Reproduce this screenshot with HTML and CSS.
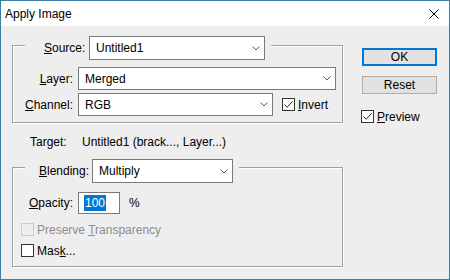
FILE: index.html
```html
<!DOCTYPE html>
<html>
<head>
<meta charset="utf-8">
<link rel="stylesheet" href="styles.css">
</head>
<body>
<div class="window">
  <div class="titlebar">
    <span class="title">Apply Image</span>
    <svg class="close" width="10" height="10" viewBox="0 0 10 10"><path d="M0.5 0.5 L9.5 9.5 M9.5 0.5 L0.5 9.5" stroke="#000" stroke-width="1" fill="none"/></svg>
  </div>
  <div class="content">
    <div class="left">
      <div class="group">
        <div class="ghead g1head">
          <div class="seg-l"></div>
          <div class="hc hc1">
            <span class="hlabel hl1"><u>S</u>ource:</span>
            <div class="select s-source"><span class="val">Untitled1</span><svg class="chev" width="8" height="5" viewBox="0 0 8 5"><path d="M0.5 0.5 L4 4 L7.5 0.5" stroke="#555" fill="none"/></svg></div>
          </div>
          <div class="seg-r"></div>
        </div>
        <div class="gbody b1">
          <div class="row r23">
            <span class="lbl"><u>L</u>ayer:</span>
            <div class="select s-layer"><span class="val">Merged</span><svg class="chev" width="8" height="5" viewBox="0 0 8 5"><path d="M0.5 0.5 L4 4 L7.5 0.5" stroke="#555" fill="none"/></svg></div>
          </div>
          <div class="row r23 gap3">
            <span class="lbl"><u>C</u>hannel:</span>
            <div class="select s-channel"><span class="val">RGB</span><svg class="chev" width="8" height="5" viewBox="0 0 8 5"><path d="M0.5 0.5 L4 4 L7.5 0.5" stroke="#555" fill="none"/></svg></div>
            <div class="check invert">
              <span class="box"><svg width="11" height="11" viewBox="0 0 11 11"><path d="M1.5 5.5 L4.2 8.3 L9.6 2.3" stroke="#222" stroke-width="1" fill="none"/></svg></span>
              <span class="ctext"><u>I</u>nvert</span>
            </div>
          </div>
        </div>
      </div>

      <div class="target">
        <span class="tlabel">Target:</span>
        <span class="tval">Untitled1 (brack..., Layer...)</span>
      </div>

      <div class="group">
        <div class="ghead g2head">
          <div class="seg-l"></div>
          <div class="hc hc2">
            <span class="hlabel hl2"><u>B</u>lending:</span>
            <div class="select s-blend"><span class="val">Multiply</span><svg class="chev" width="8" height="5" viewBox="0 0 8 5"><path d="M0.5 0.5 L4 4 L7.5 0.5" stroke="#555" fill="none"/></svg></div>
          </div>
          <div class="seg-r"></div>
        </div>
        <div class="gbody b2">
          <div class="row r22">
            <span class="lbl"><u>O</u>pacity:</span>
            <div class="input"><span class="sel">100</span></div>
            <span class="pct">%</span>
          </div>
          <div class="row r21 crow first">
            <span class="box disabled"></span>
            <span class="ctext dis">Preserve <u>T</u>ransparency</span>
          </div>
          <div class="row r21 crow">
            <span class="box"></span>
            <span class="ctext">Mas<u>k</u>...</span>
          </div>
        </div>
      </div>
    </div>

    <div class="right">
      <div class="btn ok">OK</div>
      <div class="btn reset">Reset</div>
      <div class="check preview">
        <span class="box"><svg width="11" height="11" viewBox="0 0 11 11"><path d="M1.5 5.5 L4.2 8.3 L9.6 2.3" stroke="#222" stroke-width="1" fill="none"/></svg></span>
        <span class="ctext"><u>P</u>review</span>
      </div>
    </div>
  </div>
</div>
</body>
</html>
```

FILE: styles.css
```css
* { box-sizing: border-box; }
html, body { margin: 0; padding: 0; }
body {
  width: 450px;
  height: 280px;
  font-family: "Liberation Sans", Arial, sans-serif;
  font-size: 12px;
  color: #000;
  overflow: hidden;
}
u { text-decoration: underline; text-underline-offset: 1px; }

.window {
  width: 450px;
  height: 280px;
  border: 1px solid #3a7ea3;
  display: flex;
  flex-direction: column;
  background: #eeeeee;
}
.titlebar {
  height: 25px;
  background: #fff;
  display: flex;
  align-items: center;
  padding-left: 4px;
  flex: none;
}
.title { line-height: 14px; }
.close { margin-left: auto; margin-right: 10px; display: block; }

.content {
  flex: 1;
  display: flex;
  padding: 10px 0 0 11px;
}
.left {
  width: 331px;
  display: flex;
  flex-direction: column;
}
.right {
  margin-left: 19px;
  padding-top: 12px;
  display: flex;
  flex-direction: column;
}

/* group boxes */
.ghead {
  display: flex;
  height: 24px;
}
.seg-l {
  width: 13px;
  border-top: 1px solid #a0a0a0;
  border-left: 1px solid #a0a0a0;
  box-shadow: inset 1px 1px 0 #fff;
  flex: none;
}
.seg-r {
  flex: 1;
  border-top: 1px solid #a0a0a0;
  border-right: 1px solid #a0a0a0;
  box-shadow: inset 0 1px 0 #fff, 1px 0 0 #fff;
}
.g1head .seg-l, .g1head .seg-r { margin-top: 9px; }
.g2head .seg-l, .g2head .seg-r { margin-top: 8px; }
.hc {
  display: flex;
  align-items: center;
  padding-right: 6px;
}
.hc1 { padding-left: 19px; }
.hc2 { padding-left: 14px; }
.hl1 { width: 45px; }
.hl2 { width: 53px; }

.gbody {
  border-left: 1px solid #a0a0a0;
  border-right: 1px solid #a0a0a0;
  border-bottom: 1px solid #a0a0a0;
  box-shadow: inset 1px 0 0 #fff, 1px 1px 0 #fff;
}
.b1 { padding: 7px 0 6px 0; }
.b2 { padding: 9px 0 5px 0; }

.row { display: flex; align-items: center; }
.r23 { height: 23px; }
.r22 { height: 22px; }
.r21 { height: 21px; }
.gap3 { margin-top: 3px; }
.lbl { width: 60px; text-align: right; margin-right: 5px; flex: none; }

/* select */
.select {
  height: 100%;
  background: #fff;
  border: 1px solid #7a7a7a;
  display: flex;
  align-items: center;
  padding-left: 6px;
  padding-right: 4px;
  flex: none;
}
.hc .select { height: 24px; }
.select .val { flex: 1; }
.chev { display: block; }
.s-source { width: 176px; }
.s-layer { width: 258px; }
.s-channel { width: 195px; }
.s-blend { width: 141px; }

/* checkbox */
.check { display: flex; align-items: center; }
.box {
  width: 13px;
  height: 13px;
  border: 1px solid #333;
  background: #fff;
  flex: none;
  display: block;
}
.box svg { display: block; }
.box.disabled { border-color: #cccccc; background: #eeeeee; }
.ctext { margin-left: 3px; }
.dis { color: #8d8d8d; }
.invert { margin-left: 9px; }
.crow { padding-left: 8px; }
.crow.first { margin-top: 5px; }

/* input */
.input {
  width: 42px;
  height: 22px;
  background: #fff;
  border: 1px solid #7a7a7a;
  display: flex;
  align-items: center;
  padding-left: 5px;
  flex: none;
}
.sel {
  background: #0078d7;
  color: #fff;
  line-height: 16px;
  padding: 0 1px;
}
.pct { margin-left: 9px; }

/* target */
.target {
  margin-top: 8px;
  margin-bottom: 7px;
  height: 21px;
  display: flex;
  align-items: center;
  padding-left: 18px;
}
.tlabel { width: 52px; }

/* buttons */
.btn {
  width: 75px;
  height: 18px;
  border: 1px solid #adadad;
  background: #e1e1e1;
  display: flex;
  align-items: center;
  justify-content: center;
}
.ok { border: 2px solid #0078d7; }
.reset { margin-top: 10px; }
.preview { margin-top: 16px; margin-left: -1px; height: 13px; }
```
